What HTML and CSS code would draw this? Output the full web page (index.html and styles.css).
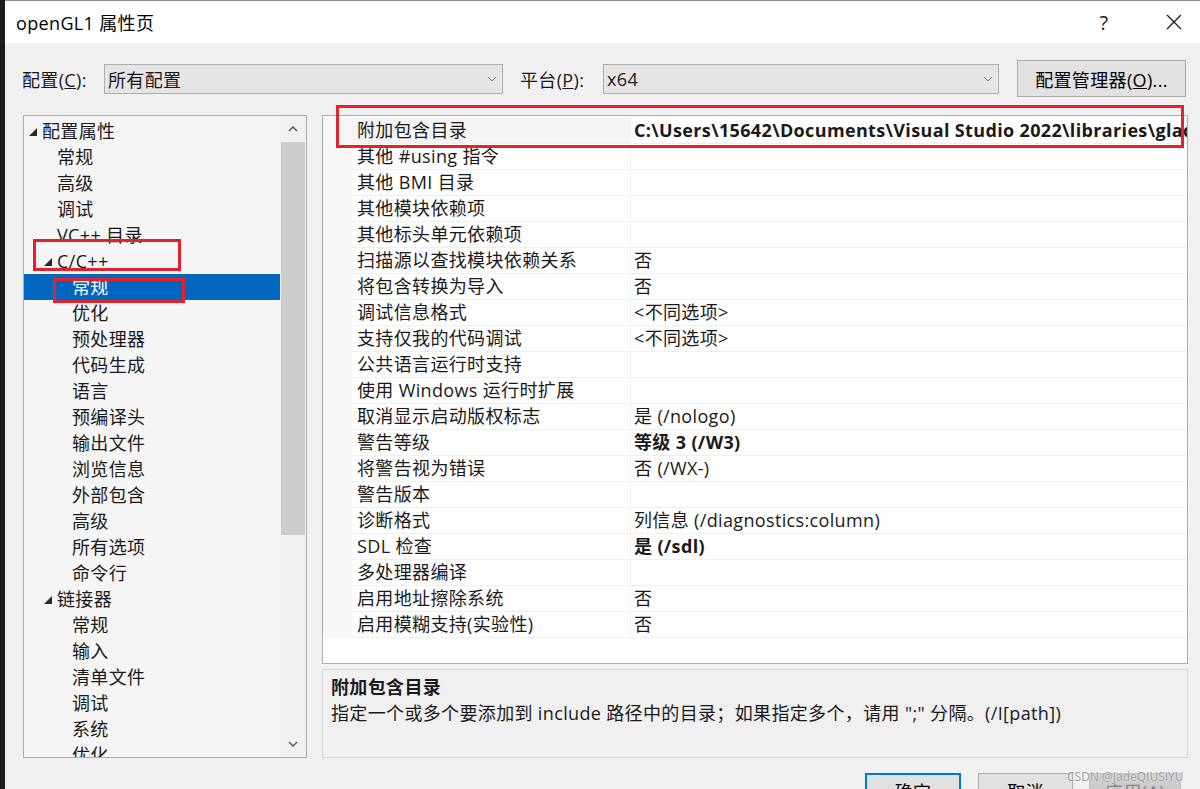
FILE: index.html
```html
<!DOCTYPE html>
<html lang="zh-CN">
<head>
    <meta charset="UTF-8">
    <title>openGL1 属性页</title>
    <link rel="stylesheet" href="styles.css">
</head>
<body>
    <div class="screen-edge"></div>

    <div class="dialog">
        <!-- Title bar -->
        <div class="titlebar">
            <span class="title">openGL1 属性页</span>
            <div class="caption-btns">
                <span class="caption-btn caption-help">?</span>
                <span class="caption-btn">
                    <svg width="16" height="16" viewBox="0 0 16 16"><path d="M1 1L15 15M15 1L1 15" stroke="#1a1a1a" stroke-width="1.3" fill="none"/></svg>
                </span>
            </div>
        </div>

        <!-- Configuration / platform -->
        <div class="config-row">
            <span class="cfg-label">配置(<u>C</u>):</span>
            <div class="combo combo-config">
                <span class="combo-text">所有配置</span>
                <svg width="10" height="6" viewBox="0 0 10 6"><path d="M1 1l4 4 4-4" fill="none" stroke="#7a7a7a" stroke-width="1"/></svg>
            </div>
            <span class="cfg-label cfg-label-platform">平台(<u>P</u>):</span>
            <div class="combo combo-platform">
                <span class="combo-text">x64</span>
                <svg width="10" height="6" viewBox="0 0 10 6"><path d="M1 1l4 4 4-4" fill="none" stroke="#7a7a7a" stroke-width="1"/></svg>
            </div>
            <button class="btn btn-manager">配置管理器(<u>O</u>)...</button>
        </div>

        <div class="main">
            <!-- Category tree -->
            <div class="tree">
                <div class="tree-list">
                    <div class="tree-item lv0"><span class="expander open"></span>配置属性</div>
                    <div class="tree-item lv1"><span class="expander"></span>常规</div>
                    <div class="tree-item lv1"><span class="expander"></span>高级</div>
                    <div class="tree-item lv1"><span class="expander"></span>调试</div>
                    <div class="tree-item lv1"><span class="expander"></span>VC++ 目录</div>
                    <div class="tree-item lv1"><span class="expander open"></span>C/C++</div>
                    <div class="tree-item lv2 selected"><span class="expander"></span>常规</div>
                    <div class="tree-item lv2"><span class="expander"></span>优化</div>
                    <div class="tree-item lv2"><span class="expander"></span>预处理器</div>
                    <div class="tree-item lv2"><span class="expander"></span>代码生成</div>
                    <div class="tree-item lv2"><span class="expander"></span>语言</div>
                    <div class="tree-item lv2"><span class="expander"></span>预编译头</div>
                    <div class="tree-item lv2"><span class="expander"></span>输出文件</div>
                    <div class="tree-item lv2"><span class="expander"></span>浏览信息</div>
                    <div class="tree-item lv2"><span class="expander"></span>外部包含</div>
                    <div class="tree-item lv2"><span class="expander"></span>高级</div>
                    <div class="tree-item lv2"><span class="expander"></span>所有选项</div>
                    <div class="tree-item lv2"><span class="expander"></span>命令行</div>
                    <div class="tree-item lv1"><span class="expander open"></span>链接器</div>
                    <div class="tree-item lv2"><span class="expander"></span>常规</div>
                    <div class="tree-item lv2"><span class="expander"></span>输入</div>
                    <div class="tree-item lv2"><span class="expander"></span>清单文件</div>
                    <div class="tree-item lv2"><span class="expander"></span>调试</div>
                    <div class="tree-item lv2"><span class="expander"></span>系统</div>
                    <div class="tree-item lv2"><span class="expander"></span>优化</div>
                </div>
                <div class="vscroll">
                    <div class="scroll-btn">
                        <svg width="10" height="6" viewBox="0 0 10 6"><path d="M1 5l4-4 4 4" fill="none" stroke="#606060" stroke-width="1.6"/></svg>
                    </div>
                    <div class="scroll-thumb"></div>
                    <div class="scroll-track"></div>
                    <div class="scroll-btn">
                        <svg width="10" height="6" viewBox="0 0 10 6"><path d="M1 1l4 4 4-4" fill="none" stroke="#606060" stroke-width="1.6"/></svg>
                    </div>
                </div>
            </div>

            <div class="right">
                <!-- Property grid -->
                <div class="grid">
                    <div class="prop-row current"><span class="gutter"></span><span class="prop-name">附加包含目录</span><span class="prop-value bold">C:\Users\15642\Documents\Visual Studio 2022\libraries\glad\include;C:\Users\15642\Documents\Visual Studio 2022\libraries\glfw\include</span></div>
                    <div class="prop-row"><span class="gutter"></span><span class="prop-name">其他 #using 指令</span><span class="prop-value"></span></div>
                    <div class="prop-row"><span class="gutter"></span><span class="prop-name">其他 BMI 目录</span><span class="prop-value"></span></div>
                    <div class="prop-row"><span class="gutter"></span><span class="prop-name">其他模块依赖项</span><span class="prop-value"></span></div>
                    <div class="prop-row"><span class="gutter"></span><span class="prop-name">其他标头单元依赖项</span><span class="prop-value"></span></div>
                    <div class="prop-row"><span class="gutter"></span><span class="prop-name">扫描源以查找模块依赖关系</span><span class="prop-value">否</span></div>
                    <div class="prop-row"><span class="gutter"></span><span class="prop-name">将包含转换为导入</span><span class="prop-value">否</span></div>
                    <div class="prop-row"><span class="gutter"></span><span class="prop-name">调试信息格式</span><span class="prop-value">&lt;不同选项&gt;</span></div>
                    <div class="prop-row"><span class="gutter"></span><span class="prop-name">支持仅我的代码调试</span><span class="prop-value">&lt;不同选项&gt;</span></div>
                    <div class="prop-row"><span class="gutter"></span><span class="prop-name">公共语言运行时支持</span><span class="prop-value"></span></div>
                    <div class="prop-row"><span class="gutter"></span><span class="prop-name">使用 Windows 运行时扩展</span><span class="prop-value"></span></div>
                    <div class="prop-row"><span class="gutter"></span><span class="prop-name">取消显示启动版权标志</span><span class="prop-value">是 (/nologo)</span></div>
                    <div class="prop-row"><span class="gutter"></span><span class="prop-name">警告等级</span><span class="prop-value bold">等级 3 (/W3)</span></div>
                    <div class="prop-row"><span class="gutter"></span><span class="prop-name">将警告视为错误</span><span class="prop-value">否 (/WX-)</span></div>
                    <div class="prop-row"><span class="gutter"></span><span class="prop-name">警告版本</span><span class="prop-value"></span></div>
                    <div class="prop-row"><span class="gutter"></span><span class="prop-name">诊断格式</span><span class="prop-value">列信息 (/diagnostics:column)</span></div>
                    <div class="prop-row"><span class="gutter"></span><span class="prop-name">SDL 检查</span><span class="prop-value bold">是 (/sdl)</span></div>
                    <div class="prop-row"><span class="gutter"></span><span class="prop-name">多处理器编译</span><span class="prop-value"></span></div>
                    <div class="prop-row"><span class="gutter"></span><span class="prop-name">启用地址擦除系统</span><span class="prop-value">否</span></div>
                    <div class="prop-row"><span class="gutter"></span><span class="prop-name">启用模糊支持(实验性)</span><span class="prop-value">否</span></div>
                </div>

                <!-- Description -->
                <div class="desc">
                    <div class="desc-title">附加包含目录</div>
                    <div class="desc-text">指定一个或多个要添加到 include 路径中的目录；如果指定多个，请用 ";" 分隔。(/I[path])</div>
                </div>
            </div>
        </div>

        <div class="footer">
            <button class="btn btn-ok">确定</button>
            <button class="btn btn-cancel">取消</button>
            <button class="btn btn-apply" disabled>应用(<u>A</u>)</button>
        </div>

        <!-- Red annotation boxes drawn over the screenshot -->
        <div class="mark mark-include"></div>
        <div class="mark mark-cpp"></div>
        <div class="mark mark-general"></div>

        <div class="watermark">CSDN @JadeQIUSIYU</div>
    </div>
</body>
</html>
```

FILE: styles.css
```css
/* Reset */
* {
    margin: 0;
    padding: 0;
    box-sizing: border-box;
}

html, body {
    height: 100%;
    overflow: hidden;
}

body {
    display: flex;
    background-color: #1c1c1c;
    font-family: "Open Sans", "Noto Sans CJK SC", sans-serif;
    font-size: 18px;
    letter-spacing: 0.35px;
    color: #1a1a1a;
}

/* Dark strip of the desktop behind the dialog */
.screen-edge {
    width: 5px;
    flex-shrink: 0;
    background-color: #1c1c1c;
}

.dialog {
    position: relative;
    width: 1195px;
    height: 789px;
    flex-shrink: 0;
    background-color: #f0f0f0;
    display: flex;
    flex-direction: column;
}

/* Title bar */
.titlebar {
    height: 43px;
    flex-shrink: 0;
    background-color: #fff;
    border-top: 1px solid #8a8a8a;
    display: flex;
    align-items: center;
    padding-left: 11px;
}

.title {
    font-size: 18px;
    color: #000;
}

.caption-btns {
    margin-left: auto;
    display: flex;
}

.caption-btn {
    width: 52px;
    height: 42px;
    display: flex;
    align-items: center;
    justify-content: center;
}

.caption-help {
    margin-right: 18px;
    font-size: 20px;
    color: #1a1a1a;
}

/* Config row */
.config-row {
    display: flex;
    align-items: center;
    height: 37px;
    flex-shrink: 0;
    margin-top: 17px;
    padding-left: 17px;
}

.cfg-label {
    width: 82px;
    flex-shrink: 0;
}

.cfg-label-platform {
    width: 83px;
    margin-left: 17px;
}

.combo {
    height: 30px;
    border: 1px solid #adadad;
    background-color: #e5e5e5;
    display: flex;
    align-items: center;
    padding: 0 5px 0 3px;
    flex-shrink: 0;
}

.combo-config {
    width: 399px;
}

.combo-platform {
    width: 396px;
}

.combo-text {
    flex: 1;
}

.btn {
    font: inherit;
    letter-spacing: inherit;
    color: #000;
    height: 36px;
    border: 1px solid #adadad;
    background-color: #e1e1e1;
    flex-shrink: 0;
}

.btn-manager {
    width: 169px;
    height: 37px;
    margin-left: 18px;
}

/* Main area */
.main {
    display: flex;
    gap: 15px;
    height: 643px;
    flex-shrink: 0;
    margin-top: 18px;
    padding-left: 18px;
}

/* Tree */
.tree {
    width: 284px;
    border: 1px solid #adadad;
    background-color: #f5f5f5;
    display: flex;
}

.tree-list {
    flex: 1;
    padding-top: 2px;
    overflow: hidden;
}

.tree-item {
    height: 26px;
    line-height: 26px;
    display: flex;
    align-items: center;
    white-space: nowrap;
}

.tree-item.lv0 { padding-left: 4px; }
.tree-item.lv1 { padding-left: 19px; }
.tree-item.lv2 { padding-left: 34px; }

.tree-item.selected {
    background-color: #0067c0;
    color: #fff;
}

.expander {
    width: 14px;
    height: 26px;
    flex-shrink: 0;
    display: flex;
    align-items: center;
}

.expander.open::before {
    content: "";
    width: 0;
    height: 0;
    margin-left: 1px;
    margin-top: 1px;
    border-left: 8px solid transparent;
    border-bottom: 8px solid #2b2b2b;
}

.vscroll {
    width: 26px;
    background-color: #f0f0f0;
    display: flex;
    flex-direction: column;
}

.scroll-btn {
    height: 26px;
    display: flex;
    align-items: center;
    justify-content: center;
}

.scroll-thumb {
    height: 393px;
    margin: 0 1px;
    background-color: #cdcdcd;
}

.scroll-track {
    flex: 1;
}

/* Right column */
.right {
    width: 866px;
    display: flex;
    flex-direction: column;
}

.grid {
    height: 549px;
    border: 1px solid #adadad;
    background-color: #fff;
    padding-top: 2px;
    overflow: hidden;
}

.prop-row {
    display: grid;
    grid-template-columns: 29px 278px 1fr;
    height: 26px;
    line-height: 25px;
}

.gutter {
    background-color: #f7f7f7;
}

.prop-name {
    padding-left: 5px;
    border-bottom: 1px solid #f0f0f0;
    white-space: nowrap;
    overflow: hidden;
}

.prop-row.current .prop-name {
    background-color: #f4f4f4;
}

.prop-value {
    padding-left: 3px;
    border-left: 1px solid #f0f0f0;
    border-bottom: 1px solid #f0f0f0;
    white-space: nowrap;
    overflow: hidden;
}

.bold {
    font-weight: bold;
}

.desc {
    margin-top: 5px;
    height: 89px;
    border: 1px solid #d5d5d5;
    padding: 4px 8px;
    line-height: 26px;
}

.desc-title {
    font-weight: bold;
}

/* Footer buttons */
.footer {
    display: flex;
    justify-content: flex-end;
    margin-top: 15px;
    padding-right: 19px;
}

.btn-ok {
    width: 96px;
    border: 2px solid #0078d7;
}

.btn-cancel {
    width: 95px;
    margin-left: 17px;
}

.btn-apply {
    width: 92px;
    margin-left: 16px;
    background-color: #cccccc;
    border-color: #bfbfbf;
    color: #838383;
}

/* Red annotation boxes drawn over the screenshot */
.mark {
    position: absolute;
    border: 3px solid #e3232c;
}

.mark-include {
    left: 331px;
    top: 105px;
    width: 848px;
    height: 43px;
}

.mark-cpp {
    left: 28px;
    top: 239px;
    width: 148px;
    height: 32px;
}

.mark-general {
    left: 48px;
    top: 278px;
    width: 132px;
    height: 25px;
}

.watermark {
    position: absolute;
    left: 1062px;
    top: 768px;
    font-size: 12px;
    letter-spacing: 0;
    color: #9c9c9c;
    text-shadow: 0 0 2px #fff;
    white-space: nowrap;
}
```
